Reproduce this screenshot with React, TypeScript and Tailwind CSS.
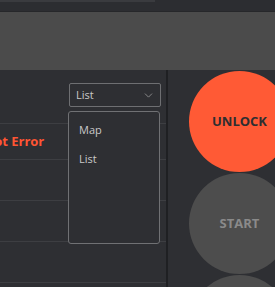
import { ChevronDown } from "lucide-react";

const ROWS = ["", "", "", ""];

function Row({ children }: { children?: React.ReactNode }) {
  return (
    <div className="flex h-[41px] shrink-0 items-center border-b border-[#3d3e42]">
      {children}
    </div>
  );
}

export default function App() {
  return (
    <div
      className="flex h-[287px] w-[275px] flex-col overflow-hidden bg-[#2e2f33]"
      style={{ fontFamily: '"Open Sans", "Noto Sans", sans-serif' }}
    >
      {/* top strip */}
      <div className="flex h-[12px] shrink-0 flex-col border-b border-[#26272a] bg-[#2c2d31]">
        <div className="h-[2px] w-[155px] bg-[#3a3b3f]" />
      </div>

      <div className="h-[58px] shrink-0 bg-[#4b4b4b]" />

      <div className="flex min-h-0 flex-1">
        {/* list panel */}
        <div className="relative flex w-[166px] shrink-0 flex-col">
          <div className="flex h-[54px] shrink-0 items-start border-b border-[#3d3e42] pl-[69px] pt-[13px]">
            <div className="flex h-[24px] w-[92px] items-center justify-between rounded-[2px] border border-[#6e6f72] pl-[6px] pr-[5px] text-[11px] text-[#c9c9c9]">
              <span>List</span>
              <ChevronDown className="size-[13px] text-[#9a9a9a]" strokeWidth={1.5} />
            </div>
          </div>

          <div className="flex h-[36px] shrink-0 items-center overflow-hidden border-b border-[#3d3e42]">
            <span className="-ml-[18px] whitespace-nowrap text-[13px] font-bold text-[#ff5533]">
              Plot Error
            </span>
          </div>

          {ROWS.map((_, i) => (
            <Row key={i} />
          ))}

          {/* open dropdown menu */}
          <div className="absolute left-[68px] top-[41px] flex h-[133px] w-[92px] flex-col rounded-[3px] border border-[#707174] bg-[#2e2f33] pl-[10px] pt-[8px] text-[11px] text-[#c9c9c9]">
            <div className="flex h-[20px] items-center">Map</div>
            <div className="mt-[9px] flex h-[20px] items-center">List</div>
          </div>
        </div>

        <div className="w-[2px] shrink-0 bg-[#1f2023]" />

        {/* action buttons */}
        <div className="flex flex-1 flex-col gap-[1px] overflow-hidden pl-[21px] pt-[1px]">
          <button className="flex size-[101px] shrink-0 items-center justify-center rounded-full bg-[#ff5a35] text-[13px] font-bold text-[#2e2e30]">
            UNLOCK
          </button>
          <button className="flex size-[101px] shrink-0 items-center justify-center rounded-full bg-[#4d4d4d] text-[13px] font-bold text-[#8a8a8a]">
            START
          </button>
          <button className="size-[101px] shrink-0 rounded-full bg-[#4d4d4d]" />
        </div>
      </div>
    </div>
  );
}
